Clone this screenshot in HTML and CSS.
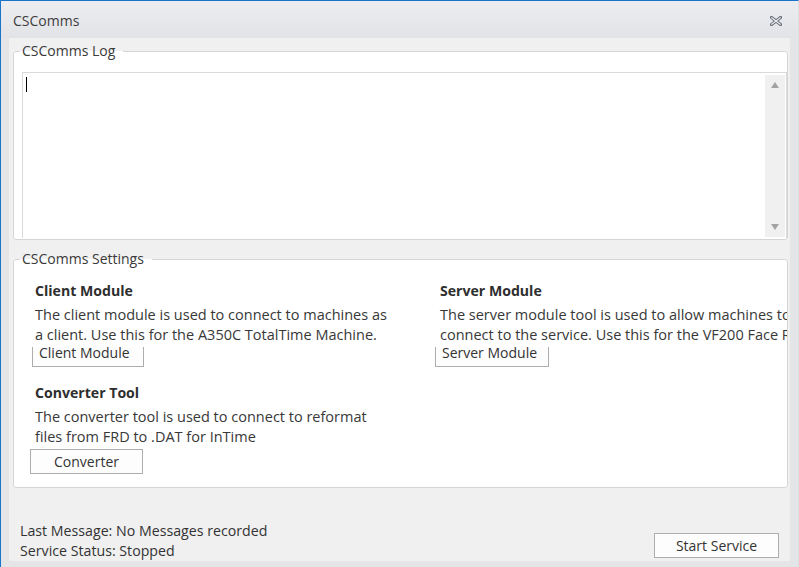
FILE: index.html
```html
<!DOCTYPE html>
<html>
<head>
<meta charset="utf-8">
<link rel="stylesheet" href="styles.css">
</head>
<body>
<div class="window">
  <div class="titlebar">
    <span class="title">CSComms</span>
    <svg class="close" width="12" height="10" viewBox="0 0 12 10">
      <path d="M1.5 1.5 L10.5 8.5 M10.5 1.5 L1.5 8.5" stroke="#6a7079" stroke-width="3.2" stroke-linecap="square" fill="none"/>
      <path d="M1.8 1.8 L10.2 8.2 M10.2 1.8 L1.8 8.2" stroke="#eceef1" stroke-width="1.1" stroke-linecap="square" fill="none"/>
    </svg>
  </div>
  <div class="client">
    <fieldset class="group log">
      <legend>CSComms Log</legend>
      <div class="textbox">
        <div class="text"><span class="caret"></span></div>
        <div class="scrollbar">
          <span class="arrow up"></span>
          <span class="arrow down"></span>
        </div>
      </div>
    </fieldset>
    <fieldset class="group settings">
      <legend>CSComms Settings</legend>
      <div class="modules">
        <div class="module">
          <div class="heading">Client Module</div>
          <div class="desc">The client module is used to connect to machines as<br>a client. Use this for the A350C TotalTime Machine.</div>
          <button class="btn partial">Client Module</button>
        </div>
        <div class="module">
          <div class="heading">Server Module</div>
          <div class="desc">The server module tool is used to allow machines to<br>connect to the service. Use this for the VF200 Face Reader.</div>
          <button class="btn partial wide">Server Module</button>
        </div>
        <div class="module convert">
          <div class="heading">Converter Tool</div>
          <div class="desc">The converter tool is used to connect to reformat<br>files from FRD to .DAT for InTime</div>
          <button class="btn full">Converter</button>
        </div>
      </div>
    </fieldset>
    <div class="footer">
      <div class="status">
        <div class="line">Last Message: No Messages recorded</div>
        <div class="line">Service Status: Stopped</div>
      </div>
      <button class="btn start">Start Service</button>
    </div>
  </div>
</div>
</body>
</html>
```

FILE: styles.css
```css
html, body {
  margin: 0;
  padding: 0;
  background: #e3e4e6;
}
body {
  font-family: "Open Sans", "Noto Sans", sans-serif;
  color: #333;
}
.window {
  width: 799px;
  height: 567px;
  box-sizing: border-box;
  border-top: 1px solid #1a73c8;
  border-left: 1px solid #1a73c8;
  border-right: 1px solid #dde0e4;
  background: #e4e5e7;
  display: flex;
  flex-direction: column;
}
.titlebar {
  height: 37px;
  flex: none;
  background: linear-gradient(#ebedf0, #e2e3e6);
  display: flex;
  align-items: center;
  padding: 2px 16px 0 12px;
  box-sizing: border-box;
}
.title {
  font-size: 14px;
  color: #3d3d3d;
  flex: 1;
}
.close {
  display: block;
  margin-top: 1px;
}
.client {
  margin-left: 8px;
  width: 781px;
  height: 523px;
  background: #f0f0f0;
  display: flex;
  flex-direction: column;
}
.group {
  margin: 0 2px 0 4px;
  border: 1px solid #d5d5d5;
  border-radius: 3px;
  background: #fff;
  min-width: 0;
}
.group legend {
  font-size: 14px;
  line-height: 20px;
  padding: 0 8px 0 2px;
  margin-left: -2px;
  color: #3a3a3a;
}
.log {
  margin-top: 3px;
  padding: 11px 0 1px 8px;
}
.textbox {
  height: 166px;
  box-sizing: border-box;
  border: 1px solid #dadada;
  border-bottom: 0;
  display: flex;
  padding: 2px 1px 1px 3px;
}
.text {
  flex: 1;
}
.caret {
  display: block;
  width: 1px;
  height: 15px;
  background: #000;
  margin-top: 2px;
}
.scrollbar {
  width: 20px;
  background: #f0f0f0;
  display: flex;
  flex-direction: column;
  justify-content: space-between;
  align-items: center;
  padding: 7px 0 7px;
}
.arrow {
  width: 0;
  height: 0;
  border-left: 4.5px solid transparent;
  border-right: 4.5px solid transparent;
}
.arrow.up {
  border-bottom: 6px solid #a3a3a3;
}
.arrow.down {
  border-top: 6px solid #a3a3a3;
}
.settings {
  margin-top: 9px;
  padding: 12px 0 13px 8px;
}
.modules {
  margin-left: 8px;
  padding-left: 5px;
  overflow: hidden;
  display: grid;
  grid-template-columns: 405px 1fr;
  row-gap: 16px;
}
.module {
  display: flex;
  flex-direction: column;
  align-items: flex-start;
  min-width: 0;
}
.heading {
  font-weight: bold;
  font-size: 14.1px;
  line-height: 20px;
  color: #2e2e2e;
  white-space: nowrap;
}
.desc {
  margin-top: 4px;
  font-size: 14.5px;
  line-height: 20px;
  white-space: nowrap;
  color: #383838;
}
.btn {
  font-family: "Open Sans", "Noto Sans", sans-serif;
  font-size: 14px;
  color: #333;
  background: #fdfdfd;
  border: 1px solid #adadad;
  border-radius: 0;
  padding: 0;
  margin: 0;
  box-sizing: border-box;
}
.btn.partial {
  margin-top: 2px;
  margin-left: -3px;
  width: 112px;
  height: 20px;
  border-top: 0;
  line-height: 12px;
  padding: 0 6px;
  text-align: left;
  display: flex;
  align-items: flex-start;
}
.btn.partial.wide {
  margin-left: -5px;
  width: 114px;
}
.btn.full {
  margin-top: 2px;
  margin-left: -5px;
  width: 113px;
  height: 25px;
  line-height: 20px;
}
.footer {
  margin-top: auto;
  display: flex;
  justify-content: space-between;
  align-items: flex-end;
  padding: 0 11px 3px 11px;
}
.status {
  font-size: 14.2px;
  line-height: 20px;
  color: #333;
  margin-bottom: -3px;
}
.btn.start {
  width: 125px;
  height: 25px;
}
```
